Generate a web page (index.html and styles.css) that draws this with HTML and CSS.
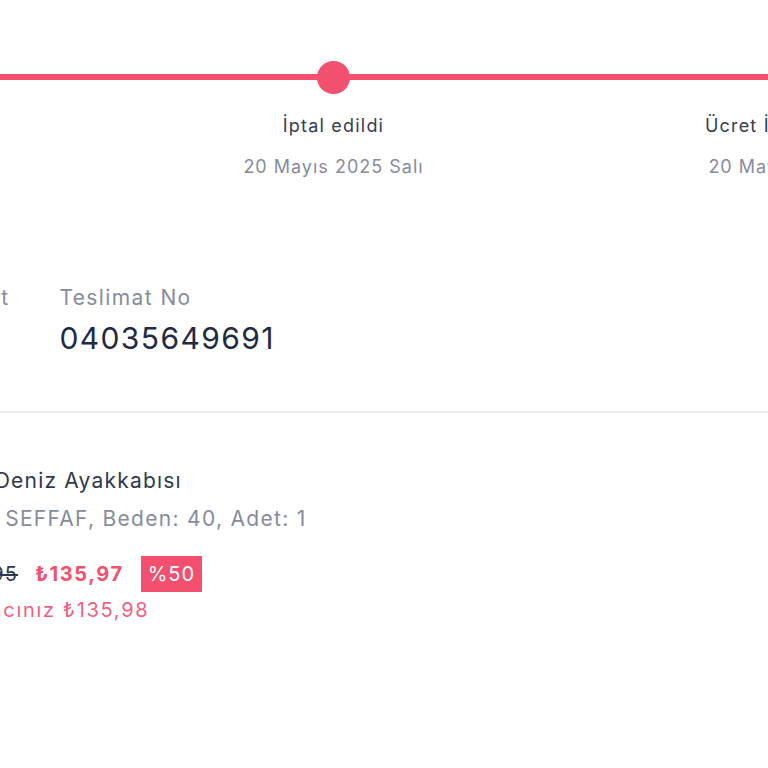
FILE: index.html
```html
<!DOCTYPE html>
<html lang="tr">
<head>
<meta charset="utf-8">
<link rel="stylesheet" href="styles.css">
</head>
<body>
<div class="page">
  <section class="tracker">
    <div class="steps">
      <div class="step">
        <div class="node"><span class="dot"></span></div>
        <div class="step-title">Sipariş Alındı</div>
        <div class="step-date">19 Mayıs 2025 Pazartesi</div>
      </div>
      <div class="step">
        <div class="node"><span class="dot"></span></div>
        <div class="step-title">İptal edildi</div>
        <div class="step-date">20 Mayıs 2025 Salı</div>
      </div>
      <div class="step">
        <div class="node"><span class="dot"></span></div>
        <div class="step-title">Ücret İadesi Yapıldı</div>
        <div class="step-date">20 Mayıs 2025 Salı</div>
      </div>
    </div>
  </section>

  <section class="info">
    <div class="info-col">
      <div class="info-label">Toplam Adet</div>
      <div class="info-value">1</div>
    </div>
    <div class="info-col">
      <div class="info-label">Teslimat No</div>
      <div class="info-value">04035649691</div>
    </div>
  </section>

  <hr class="divider">

  <section class="product">
    <div class="product-name">Spor Deniz Ayakkabısı</div>
    <div class="product-variant">Renk: SEFFAF, Beden: 40, Adet: 1</div>
    <div class="price-row">
      <span class="price-old">₺271,95</span>
      <span class="price-new">₺135,97</span>
      <span class="badge">%50</span>
    </div>
    <div class="saving">Kazancınız ₺135,98</div>
  </section>
</div>
</body>
</html>
```

FILE: styles.css
```css
html, body {
  margin: 0;
  padding: 0;
  background: #ffffff;
}

body {
  font-family: Inter, "Noto Sans", "Liberation Sans", sans-serif;
  color: #2e3850;
  overflow: hidden;
}

.page {
  width: 768px;
  height: 768px;
  overflow: hidden;
}

.tracker {
  padding-top: 61px;
}

.steps {
  display: flex;
  margin-left: -364px;
}

.step {
  flex: 0 0 465px;
  display: flex;
  flex-direction: column;
  align-items: center;
}

.node {
  align-self: stretch;
  height: 33px;
  display: flex;
  justify-content: center;
  background: linear-gradient(to bottom, transparent 13px, #f2506e 13px, #f2506e 19px, transparent 19px);
}

.dot {
  width: 33px;
  height: 33px;
  border-radius: 50%;
  background: #f2506e;
}

.step-title {
  margin-top: 20px;
  font-size: 18px;
  line-height: 24px;
  letter-spacing: 1.2px;
  color: #343d52;
  white-space: nowrap;
}

.step-date {
  margin-top: 17px;
  font-size: 18px;
  line-height: 24px;
  letter-spacing: 1px;
  color: #868b9c;
  white-space: nowrap;
}

.info {
  display: flex;
  gap: 50px;
  margin-top: 104px;
  margin-left: -131px;
}

.info-col {
  display: flex;
  flex-direction: column;
}

.info-label {
  font-size: 21px;
  line-height: 30px;
  letter-spacing: 1.4px;
  color: #868b9c;
  white-space: nowrap;
}

.info-value {
  margin-top: 5px;
  font-size: 30px;
  line-height: 40px;
  letter-spacing: 1.4px;
  color: #1f2a45;
  white-space: nowrap;
}

.divider {
  margin: 53px 0 0 0;
  border: 0;
  height: 2px;
  background: #ececec;
}

.product {
  margin-top: 54px;
  margin-left: -64px;
  display: flex;
  flex-direction: column;
}

.product-name {
  font-size: 21px;
  line-height: 28px;
  letter-spacing: 1.2px;
  color: #2e3850;
  white-space: nowrap;
}

.product-variant {
  margin-top: 10px;
  font-size: 21px;
  line-height: 28px;
  letter-spacing: 1.3px;
  color: #868b9c;
  white-space: nowrap;
}

.price-row {
  margin-top: 23px;
  display: flex;
  align-items: center;
  gap: 17px;
}

.price-old {
  font-size: 20px;
  letter-spacing: 1.2px;
  color: #2e3850;
  text-decoration: line-through;
  white-space: nowrap;
}

.price-new {
  font-size: 20px;
  font-weight: 700;
  letter-spacing: 1.6px;
  color: #f2506e;
  white-space: nowrap;
}

.badge {
  background: #f2506e;
  color: #ffffff;
  font-size: 20px;
  line-height: 36px;
  letter-spacing: 1px;
  padding: 0 7px;
}

.saving {
  margin-top: 4px;
  font-size: 20px;
  line-height: 28px;
  letter-spacing: 1.7px;
  color: #f2607e;
  white-space: nowrap;
}
```
